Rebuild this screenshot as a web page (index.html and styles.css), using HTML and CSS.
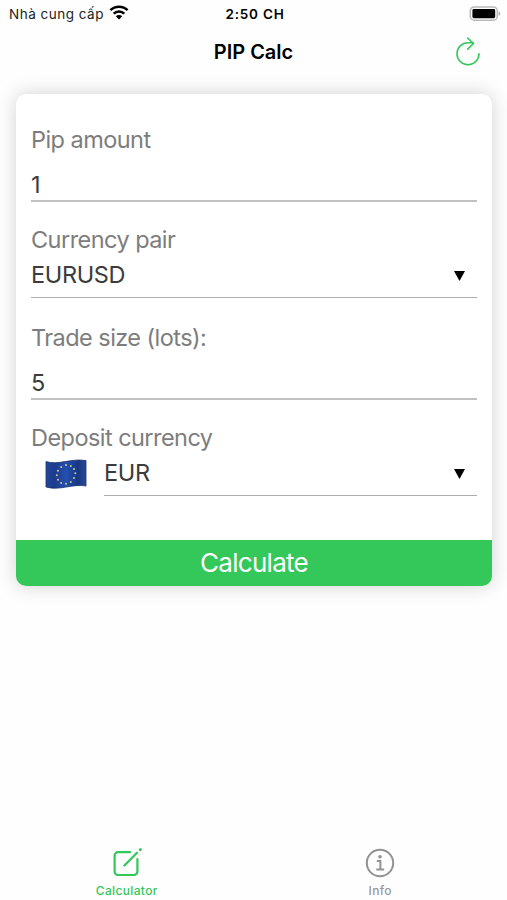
FILE: index.html
```html
<!DOCTYPE html>
<html lang="vi">

<head>
    <meta charset="UTF-8">
    <title>PIP Calc</title>
    <link rel="stylesheet" href="styles.css">
</head>

<body>
    <div class="status-bar">
        <div class="carrier">
            <span class="carrier-name">Nhà cung cấp</span>
            <svg class="wifi" width="20" height="15" viewBox="0 0 20 15" fill="none" stroke="#000" stroke-width="2.5">
                <path d="M1.4 5.2a12.2 12.2 0 0 1 17.2 0" />
                <path d="M4.7 8.6a7.6 7.6 0 0 1 10.6 0" />
                <path d="M10 14.4L6.8 11.2a4.6 4.6 0 0 1 6.4 0z" fill="#000" stroke="none" />
            </svg>
        </div>
        <div class="time">2:50 CH</div>
        <div class="battery">
            <svg width="32" height="16" viewBox="0 0 32 16">
                <rect x="1.3" y="1" width="27" height="13.2" rx="4" fill="#fff" stroke="#b9b9b9" stroke-width="1.6" />
                <rect x="3.4" y="3" width="22.8" height="9.2" rx="1.4" fill="#000" />
                <path d="M29.6 5.2q1.8 .7 1.8 2.4t-1.8 2.4z" fill="#b0b0b0" />
            </svg>
        </div>
    </div>

    <div class="header">
        <h1>PIP Calc</h1>
        <svg class="reload" width="26" height="30" viewBox="0 0 26 30" fill="none" stroke="#34c759" stroke-width="1.6" stroke-linecap="round" stroke-linejoin="round">
            <path d="M24 16.7a11 11 0 1 1-11-11h5.4" />
            <path d="M12.7 1.1l5.8 5.4l-5.8 5.6" />
        </svg>
    </div>

    <div class="card">
        <div class="form">
            <div class="field">
                <div class="label">Pip amount</div>
                <div class="value input">1</div>
            </div>
            <div class="field">
                <div class="label">Currency pair</div>
                <div class="value select"><span>EURUSD</span><i class="arrow"></i></div>
            </div>
            <div class="field">
                <div class="label">Trade size (lots):</div>
                <div class="value input">5</div>
            </div>
            <div class="field">
                <div class="label">Deposit currency</div>
                <div class="currency">
                    <svg class="flag" width="42" height="30" viewBox="0 0 42 30">
                        <defs>
                            <linearGradient id="cloth">
                                <stop offset="0" stop-color="#24479a" />
                                <stop offset="0.2" stop-color="#1c3b8c" />
                                <stop offset="0.5" stop-color="#2450ae" />
                                <stop offset="0.8" stop-color="#173783" />
                                <stop offset="1" stop-color="#284b98" />
                            </linearGradient>
                        </defs>
                        <path d="M1 2.6C14 6.5 26-1 41 1.6V27C27 24.5 15 32 1 28z" fill="url(#cloth)" stroke="#19316f" stroke-width="0.8" />
                        <g fill="#cdc795">
                            <circle cx="21" cy="6" r="1" />
                            <circle cx="25.8" cy="7" r="1" />
                            <circle cx="29" cy="10" r="1" />
                            <circle cx="30.3" cy="14.3" r="1" />
                            <circle cx="29" cy="19" r="1" />
                            <circle cx="25.8" cy="22.9" r="1" />
                            <circle cx="21" cy="24.7" r="1" />
                            <circle cx="16.2" cy="23.9" r="1" />
                            <circle cx="13" cy="20.7" r="1" />
                            <circle cx="11.8" cy="16.3" r="1" />
                            <circle cx="13" cy="11.8" r="1" />
                            <circle cx="16.2" cy="8.1" r="1" />
                        </g>
                    </svg>
                    <div class="value select"><span>EUR</span><i class="arrow"></i></div>
                </div>
            </div>
        </div>
        <button class="calculate">Calculate</button>
    </div>

    <div class="tabs">
        <div class="tab active">
            <svg width="30" height="30" viewBox="0 0 30 30" fill="none" stroke="#34c759" stroke-width="2.2" stroke-linecap="round">
                <path d="M18 4.2H6a3.4 3.4 0 0 0-3.4 3.4V23.6a3.4 3.4 0 0 0 3.4 3.4H22a3.4 3.4 0 0 0 3.4-3.4V11.2" />
                <path d="M12.4 17.5L25 4.7" />
                <path d="M28.2 1.7l.2-.2" stroke-width="2.8" />
            </svg>
            <span>Calculator</span>
        </div>
        <div class="tab">
            <svg width="30" height="30" viewBox="0 0 30 30" fill="none" stroke="#929292" stroke-width="2">
                <circle cx="15" cy="15" r="13.2" />
                <path d="M11.8 13H15.4V21.6M11.3 21.6H19.2" />
                <circle cx="15" cy="8.7" r="1.8" fill="#929292" stroke="none" />
            </svg>
            <span>Info</span>
        </div>
    </div>
</body>

</html>
```
FILE: styles.css
```css
* {
    box-sizing: border-box;
}

body {
    margin: 0;
    height: 900px;
    display: flex;
    flex-direction: column;
    background-color: #fefefe;
    color: #000;
    font-family: Inter, "Liberation Sans", sans-serif;
    overflow: hidden;
}

.status-bar {
    display: grid;
    grid-template-columns: 1fr auto 1fr;
    align-items: center;
    height: 28px;
    padding: 0 6px 0 9px;
    font-size: 13.5px;
}

.carrier {
    display: flex;
    align-items: center;
    gap: 5px;
    color: #222;
}

.carrier-name {
    width: 95px;
    letter-spacing: 0.5px;
    white-space: nowrap;
}

.wifi {
    position: relative;
    top: -2px;
}

.time {
    font-weight: 600;
    letter-spacing: 0.8px;
}

.battery {
    display: flex;
    justify-content: flex-end;
}

.header {
    display: grid;
    grid-template-columns: 1fr auto 1fr;
    align-items: center;
    height: 48px;
    padding: 0 26px;
}

.header h1 {
    grid-column: 2;
    margin: 0;
    font-size: 20px;
    font-weight: 600;
    letter-spacing: 0;
}

.reload {
    justify-self: end;
}

.card {
    margin: 18px 15px 0 16px;
    height: 492px;
    display: flex;
    flex-direction: column;
    background-color: #fff;
    border-radius: 10px;
    box-shadow: 0 0 20px rgba(0, 0, 0, 0.18);
    overflow: hidden;
}

.form {
    flex: 1;
    padding: 30px 15px 0;
}

.field {
    margin-bottom: 22px;
}

.field:nth-child(2) {
    margin-bottom: 24px;
}

.label {
    height: 30px;
    line-height: 31px;
    color: #7d7d7d;
    font-size: 23.5px;
    letter-spacing: -0.55px;
}

.value {
    color: #3c3c3c;
    font-size: 23.5px;
    line-height: 30px;
    letter-spacing: -0.35px;
}

.input {
    height: 48px;
    padding-top: 16px;
    border-bottom: 2px solid #c2c2c2;
}

.select {
    display: flex;
    justify-content: space-between;
    height: 44px;
    padding: 6px 12px 0 0;
    border-bottom: 1px solid #adadad;
}

.arrow {
    width: 11px;
    height: 10px;
    margin-top: 11px;
    background-color: #000;
    clip-path: polygon(0 0, 100% 0, 50% 100%);
}

.currency {
    display: flex;
    padding-left: 14px;
}

.currency .select {
    flex: 1;
    margin-left: 17px;
}

.flag {
    margin-top: 7px;
}

.calculate {
    height: 46px;
    border: none;
    padding: 0;
    background-color: #34c759;
    color: #fff;
    font-family: inherit;
    font-size: 26px;
    line-height: 46px;
    letter-spacing: -0.7px;
}

.tabs {
    display: flex;
    margin-top: auto;
    height: 52px;
}

.tab {
    flex: 1;
    display: flex;
    flex-direction: column;
    align-items: center;
    color: #999;
    font-size: 12px;
    font-weight: 500;
    letter-spacing: 0.35px;
}

.tab span {
    margin-top: 5px;
}

.active {
    color: #34c759;
}
```
